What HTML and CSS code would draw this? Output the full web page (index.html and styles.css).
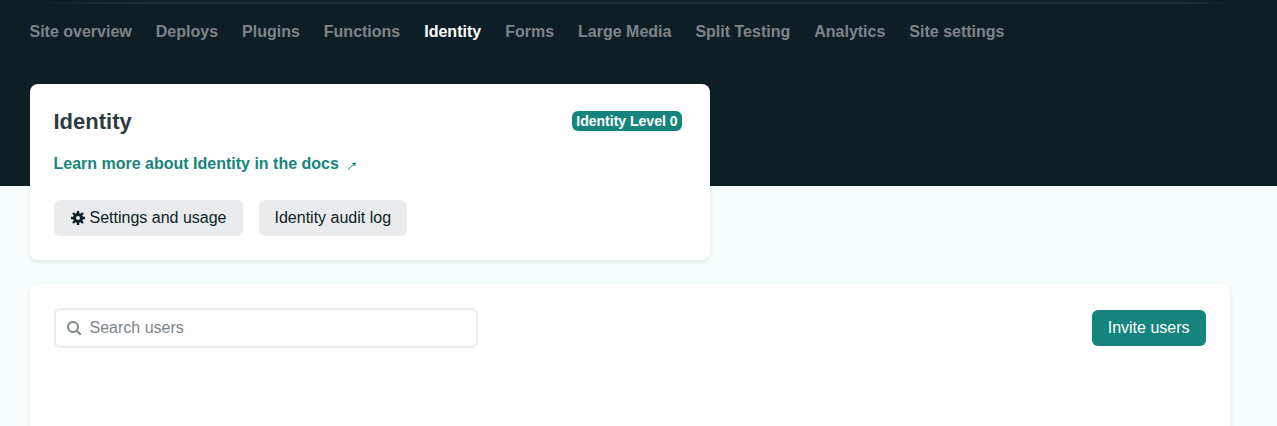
FILE: index.html
```html
<!DOCTYPE html>
<html lang="en">
<head>
<meta charset="utf-8">
<title>Identity</title>
<link rel="stylesheet" href="styles.css">
</head>
<body>
<div class="page">
  <header class="top">
    <div class="divider"></div>
    <nav class="nav">
      <a>Site overview</a><a>Deploys</a><a>Plugins</a><a>Functions</a><a class="active">Identity</a><a>Forms</a><a>Large Media</a><a>Split Testing</a><a>Analytics</a><a>Site settings</a>
    </nav>
  </header>
  <main class="content">
    <section class="card intro">
      <div class="heading">
        <h1>Identity</h1>
        <span class="badge">Identity Level 0</span>
      </div>
      <a class="docs">Learn more about Identity in the docs<svg class="arrow" width="10" height="10" viewBox="0 0 10 10"><path d="M.8 8.6L7.5 3" fill="none" stroke="currentColor" stroke-width=".9"/><path d="M4.6 2L9 1.4L8 5.2Z" fill="currentColor"/></svg></a>
      <div class="actions">
        <button class="button"><svg class="gear" width="14" height="14" viewBox="0 0 14 14"><g stroke="currentColor" stroke-width="2.4"><path d="M7 0V3M7 11V14M0 7H3M11 7H14M2 2L4.2 4.2M9.8 9.8L12 12M12 2L9.8 4.2M4.2 9.8L2 12"/><circle cx="7" cy="7" r="3.5" fill="none" stroke-width="3"/></g></svg>Settings and usage</button>
        <button class="button">Identity audit log</button>
      </div>
    </section>
    <section class="card users">
      <label class="search">
        <svg width="16" height="16" viewBox="0 0 16 16" fill="none" stroke="currentColor" stroke-width="2"><circle cx="7" cy="7" r="5"/><path d="M10.5 10.5L14.7 14.7"/></svg>
        <input type="text" placeholder="Search users">
      </label>
      <button class="button primary">Invite users</button>
    </section>
  </main>
</div>
</body>
</html>
```
FILE: styles.css
```css
* { box-sizing: border-box; }
body {
  margin: 0;
  background: #f7fdfd;
  color: #0e1e25;
  font: 16px/24px "Liberation Sans", Arial, sans-serif;
}
.page { height: 426px; overflow: hidden; }
.top {
  height: 186px;
  padding: 2px 47.5px 0 29.5px;
  background: #0e1e25;
}
.divider {
  height: 2px;
  background: linear-gradient(to right, #0e1e25, #1f2e34 10%, #1f2e34 96%, #0e1e25);
}
.nav {
  display: flex;
  gap: 24px;
  padding-top: 16px;
  color: #7d8588;
  font-weight: bold;
}
.active { color: #fff; }
.content { margin: -102px 47.5px 0 29.5px; }
.card {
  background: #fff;
  border-radius: 8px;
  box-shadow: 0 2px 4px rgba(14, 30, 37, .12);
}
.intro {
  width: 680px;
  height: 176px;
  padding: 24px;
}
.heading {
  display: flex;
  justify-content: space-between;
  padding-right: 4px;
}
h1 {
  margin: 0;
  font-size: 22px;
  line-height: 28px;
  color: #2d3b41;
}
.badge {
  height: 20px;
  margin-top: 3px;
  padding: 0 4px;
  border-radius: 6px;
  background: #15847d;
  color: #fff;
  font-size: 14px;
  font-weight: bold;
  line-height: 20px;
}
.docs {
  display: flex;
  align-items: center;
  margin-top: 16px;
  color: #15847d;
  font-weight: bold;
}
.arrow { margin: 4px 0 0 8.5px; }
.actions {
  display: flex;
  gap: 16px;
  margin-top: 24px;
}
.button {
  display: flex;
  align-items: center;
  height: 36px;
  padding: 0 16px;
  border: 0;
  border-radius: 6px;
  background: #e9ebec;
  color: #0e1e25;
  font: inherit;
}
.gear { margin: 0 5px 0 1px; }
.users {
  display: flex;
  justify-content: space-between;
  align-items: flex-start;
  height: 200px;
  margin-top: 24px;
  padding: 24px;
}
.search {
  display: flex;
  align-items: center;
  width: 424px;
  height: 40px;
  padding: 0 10px;
  border: 2px solid #e9ebeb;
  border-radius: 6px;
  color: #7d8589;
}
.search input {
  flex: 1;
  padding: 0 0 0 8px;
  border: 0;
  background: none;
  font: inherit;
}
.search input::placeholder { color: #7d8589; }
.primary {
  margin-top: 2px;
  background: #15847d;
  color: #fff;
}
```
